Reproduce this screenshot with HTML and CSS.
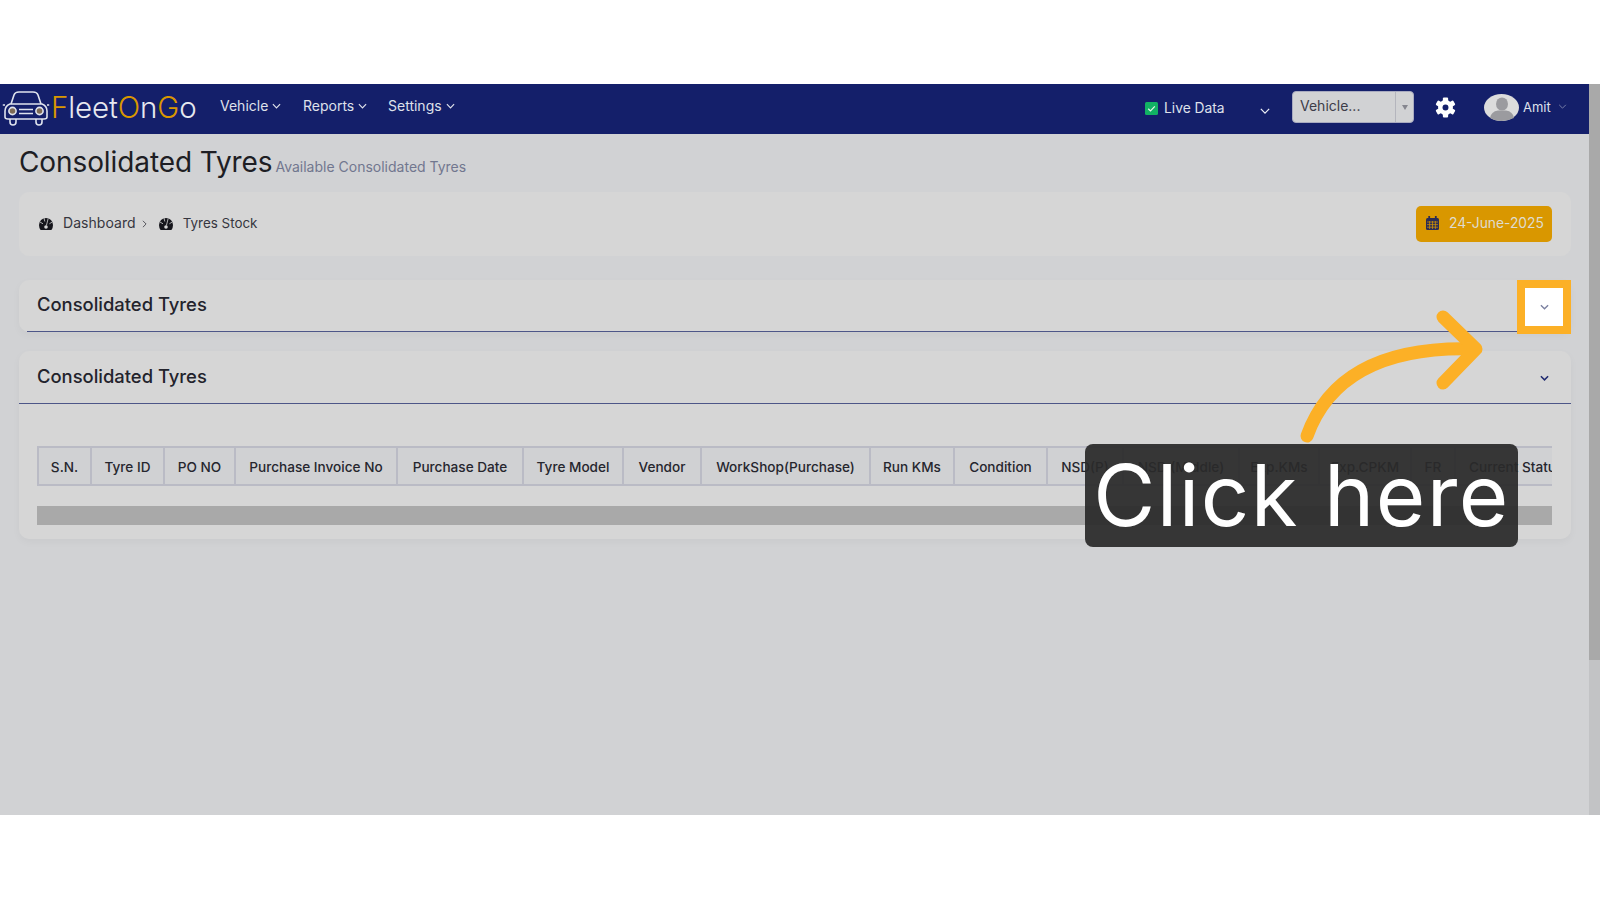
FILE: index.html
```html
<!DOCTYPE html>
<html lang="en">
<head>
<meta charset="utf-8">
<title>Consolidated Tyres</title>
<link rel="stylesheet" href="styles.css">
</head>
<body>
<div class="app">
  <div class="main">
    <header class="nav">
      <a class="brand">
        <svg class="car" viewBox="0 0 48 36" fill="none" stroke="#dfe3ee" stroke-width="1.6">
          <path d="M9 14 L12 5 Q13 2 17 2 H31 Q35 2 36 5 L39 14"/>
          <path d="M8 14 H40 Q45 16 45 21 V27 Q45 29 42 29 H6 Q3 29 3 27 V21 Q3 16 8 14 Z"/>
          <path d="M8 29 V32 Q8 35 11 35 Q14 35 14 32 V29 M34 29 V32 Q34 35 37 35 Q40 35 40 32 V29"/>
          <path d="M3 15 H0.8 M45 15 H47.2"/>
          <circle cx="10.5" cy="21" r="3.6" fill="#7d6a55"/>
          <circle cx="37.5" cy="21" r="3.6" fill="#7d6a55"/>
          <path d="M17 19.5 H31 M17 23.5 H31"/>
        </svg>
        <span class="wordmark"><span class="gold">F</span>leet<span class="gold">O</span>n<span class="gold">G</span>o</span>
      </a>
      <nav class="menu">
        <a class="menu-item menu-vehicle">Vehicle <svg class="chev" viewBox="0 0 10 6"><path d="M1 1 L5 5 L9 1"/></svg></a>
        <a class="menu-item menu-reports">Reports <svg class="chev" viewBox="0 0 10 6"><path d="M1 1 L5 5 L9 1"/></svg></a>
        <a class="menu-item">Settings <svg class="chev" viewBox="0 0 10 6"><path d="M1 1 L5 5 L9 1"/></svg></a>
      </nav>
      <div class="nav-right">
        <span class="live">
          <svg class="check" viewBox="0 0 13 13"><rect width="13" height="13" rx="1.5" fill="#12b264"/><path d="M3.2 6.8 L5.5 9 L9.8 4.4" fill="none" stroke="#e6f5ec" stroke-width="1.2"/></svg>
          <span>Live Data</span>
        </span>
        <svg class="live-chev" viewBox="0 0 12 7"><path d="M1 1 L6 6 L11 1"/></svg>
        <div class="select">
          <span class="select-value">Vehicle...</span>
          <span class="select-arrow"><i class="tri"></i></span>
        </div>
        <svg class="gear" viewBox="0 0 24 24">
          <g fill="#fff">
            <rect x="9" y="0.5" width="6" height="23" rx="1.2"/>
            <rect x="9" y="0.5" width="6" height="23" rx="1.2" transform="rotate(60 12 12)"/>
            <rect x="9" y="0.5" width="6" height="23" rx="1.2" transform="rotate(120 12 12)"/>
          </g>
          <circle cx="12" cy="12" r="6" fill="none" stroke="#fff" stroke-width="5"/>
          <circle cx="12" cy="12" r="3.4" fill="#141f6a"/>
        </svg>
        <svg class="avatar" viewBox="0 0 35 27">
          <ellipse cx="17.5" cy="13.5" rx="17.5" ry="13.5" fill="#dcdcdc"/>
          <ellipse cx="18" cy="10" rx="6" ry="6.6" fill="#9b9b9f"/>
          <path d="M6 24 Q7 17.5 14 16.5 H22 Q29 17.5 30 24 Q24 27 17.5 27 Q11 27 6 24 Z" fill="#9b9b9f"/>
        </svg>
        <span class="user">Amit</span>
        <svg class="user-chev" viewBox="0 0 10 6"><path d="M1 1 L5 5 L9 1"/></svg>
      </div>
    </header>

    <main class="content">
      <div class="title-row">
        <h1 class="title">Consolidated Tyres</h1>
        <span class="subtitle">Available Consolidated Tyres</span>
      </div>

      <section class="crumbs">
        <div class="crumb-list">
          <svg class="gauge" viewBox="0 0 14 12"><path d="M7 0 A7 7 0 0 0 0 7 Q0 10 1.6 12 H12.4 Q14 10 14 7 A7 7 0 0 0 7 0 Z" fill="#16161c"/><path d="M5 0 L5.8 3.5 M9.2 0.4 L7.4 7.5 M1 4 L4 5.8 M13.2 4 L10.4 5.8" stroke="#d6d6d6" stroke-width="0.8"/><circle cx="7" cy="9" r="1.8" fill="#d6d6d6"/></svg>
          <span class="crumb">Dashboard</span>
          <svg class="crumb-sep" viewBox="0 0 6 10"><path d="M1 1 L5 5 L1 9"/></svg>
          <svg class="gauge" viewBox="0 0 14 12"><path d="M7 0 A7 7 0 0 0 0 7 Q0 10 1.6 12 H12.4 Q14 10 14 7 A7 7 0 0 0 7 0 Z" fill="#16161c"/><path d="M5 0 L5.8 3.5 M9.2 0.4 L7.4 7.5 M1 4 L4 5.8 M13.2 4 L10.4 5.8" stroke="#d6d6d6" stroke-width="0.8"/><circle cx="7" cy="9" r="1.8" fill="#d6d6d6"/></svg>
          <span class="crumb crumb-last">Tyres Stock</span>
        </div>
        <div class="date">
          <svg class="cal" viewBox="0 0 13 14"><path d="M1.5 2 H11.5 Q13 2 13 3.5 V12.5 Q13 14 11.5 14 H1.5 Q0 14 0 12.5 V3.5 Q0 2 1.5 2 Z" fill="#2c2c55"/><path d="M3.2 0 V3 M9.8 0 V3" stroke="#2c2c55" stroke-width="1.8"/><path d="M1 6 H12 M1 8.6 H12 M1 11.2 H12 M3.6 5 V13 M6.5 5 V13 M9.4 5 V13" stroke="#d99700" stroke-width="0.7"/></svg>
          <span>24-June-2025</span>
        </div>
      </section>

      <section class="card card-collapsed">
        <div class="card-head card-head-inset">
          <h2 class="card-title">Consolidated Tyres</h2>
        </div>
      </section>

      <section class="card">
        <div class="card-head">
          <h2 class="card-title">Consolidated Tyres</h2>
          <svg class="card-chev" viewBox="0 0 10 6"><path d="M1 1 L5 5 L9 1"/></svg>
        </div>
        <div class="card-body">
          <div class="table-wrap">
            <table class="grid">
              <thead>
                <tr>
                  <th>S.N.</th><th>Tyre ID</th><th>PO NO</th><th>Purchase Invoice No</th><th>Purchase Date</th><th>Tyre Model</th><th>Vendor</th><th>WorkShop(Purchase)</th><th>Run KMs</th><th>Condition</th><th>NSD(P)</th><th>NSD (Middle)</th><th>Exp.KMs</th><th>Exp.CPKM</th><th>FR</th><th>Current Status</th>
                </tr>
              </thead>
            </table>
          </div>
          <div class="hscroll"></div>
        </div>
      </section>
    </main>
  </div>
  <div class="scrollbar"><div class="thumb"></div></div>

  <div class="highlight">
    <svg class="highlight-chev" viewBox="0 0 10 6"><path d="M1 1 L5 5 L9 1"/></svg>
  </div>
  <svg class="arrow" viewBox="0 0 210 150" fill="none">
    <path d="M17 136 C35 86 80 46 184 49"/>
    <path d="M153 17 L186 49 L153 83"/>
  </svg>
  <div class="tip">Click here</div>
</div>
</body>
</html>
```

FILE: styles.css
```css
* { box-sizing: border-box; }

html, body { margin: 0; padding: 0; background: #fff; overflow: hidden; }

body {
  height: 900px;
  padding-top: 84px;
  font-family: Inter, "Liberation Sans", sans-serif;
  color: #2c2c34;
}

.app {
  position: relative;
  display: flex;
  width: 1600px;
  height: 731px;
  background: #d1d2d4;
}

.main { flex: 1; min-width: 0; display: flex; flex-direction: column; }

.scrollbar { width: 11px; background: #c2c3c5; }
.thumb { height: 576px; background: #a9a9a9; }

/* top bar */
.nav {
  display: flex;
  align-items: center;
  height: 50px;
  background: #141f6a;
  color: #dfe1ea;
  flex: none;
}

.brand { display: flex; align-items: center; margin: -4px 0 0 2px; width: 218px; }
.car { width: 48px; height: 36px; flex: none; margin-top: 2px; }
.wordmark {
  font-size: 29.5px;
  font-weight: 300;
  margin-left: 1px;
  letter-spacing: -0.1px;
  color: #e6e8ef;
}
.gold { color: #d99700; }

.menu { display: flex; align-items: center; }
.menu-item { display: flex; align-items: center; gap: 4px; font-size: 14px; font-weight: 400; margin-top: -7px; }
.menu-vehicle { width: 83px; }
.menu-reports { width: 85px; }

.chev { width: 9px; height: 6px; fill: none; stroke: #dfe1ea; stroke-width: 1.3; }

.nav-right { display: flex; align-items: center; margin-left: auto; }
.live { display: flex; align-items: center; gap: 6px; font-size: 13.8px; width: 115px; margin-top: -2px; }
.check { width: 13px; height: 13px; flex: none; }
.live-chev { width: 10px; height: 6px; fill: none; stroke: #eef0f6; stroke-width: 1.5; margin-top: 3px; }

.select {
  display: flex;
  align-items: stretch;
  width: 122px;
  height: 32px;
  margin: -4px 0 0 22px;
  background: #d1d2d4;
  border: 1px solid #a9abc0;
  border-radius: 4px;
  color: #3d3d48;
  font-size: 14px;
}
.select-value { flex: 1; padding-left: 7px; line-height: 28px; }
.select-arrow {
  display: flex;
  align-items: center;
  justify-content: center;
  width: 18px;
  border-left: 1px solid #b4b5bd;
}
.tri {
  width: 0;
  height: 0;
  border-left: 3px solid transparent;
  border-right: 3px solid transparent;
  border-top: 5px solid #85868f;
}

.gear { width: 21px; height: 21px; margin: -3px 0 0 21px; flex: none; }
.avatar { width: 35px; height: 27px; margin: -3px 0 0 28px; flex: none; }
.user { font-size: 13px; margin: -5px 0 0 4px; width: 29px; }
.user-chev { width: 9px; height: 5px; fill: none; stroke: #8a90b4; stroke-width: 1; margin: -5px 22px 0 6px; }

/* content */
.content { padding: 0 18px 0 19px; }

.title-row { display: flex; align-items: baseline; gap: 3px; height: 58px; padding-top: 8px; }
.title { margin: 0; font-size: 28px; font-weight: 400; color: #1e1e24; letter-spacing: -0.1px; line-height: 40px; }
.subtitle { font-size: 14px; color: #71778f; }

.crumbs {
  display: flex;
  align-items: center;
  justify-content: space-between;
  height: 64px;
  margin-bottom: 24px;
  padding: 0 19px 0 20px;
  background: #d6d6d6;
  border-radius: 10px;
}
.crumb-list { display: flex; align-items: center; margin-top: -3px; }
.gauge { width: 14px; height: 12px; flex: none; margin-top: 2px; }
.crumb { font-size: 14px; color: #36363f; margin-left: 10px; letter-spacing: 0.06px; }
.crumb-last { font-size: 13.4px; letter-spacing: 0; }
.crumb-sep { width: 5px; height: 8px; margin: 2px 12px 0 6px; fill: none; stroke: #36363f; stroke-width: 1; }

.date {
  display: flex;
  align-items: center;
  gap: 10px;
  width: 136px;
  height: 36px;
  padding: 0 0 2px 10px;
  background: #d99700;
  border-radius: 5px;
  color: #dedcd0;
  font-size: 13.8px;
  white-space: nowrap;
}
.cal { width: 13px; height: 14px; flex: none; }

.card {
  background: #d6d6d6;
  border-radius: 10px;
  box-shadow: 0 3px 8px rgba(0, 0, 0, 0.035);
}
.card-collapsed { height: 52px; margin-bottom: 19px; }

.card-head {
  display: flex;
  align-items: center;
  justify-content: space-between;
  height: 53px;
  padding: 0 22px 2px 18px;
  border-bottom: 1px solid #4d5688;
}
.card-head-inset { height: 52px; margin-left: 8px; padding: 0 22px 3px 10px; }
.card-title { margin: 0; font-size: 18.4px; font-weight: 500; color: #23232c; }
.card-chev { width: 9px; height: 6px; margin-top: 4px; fill: none; stroke: #202b70; stroke-width: 1.7; }

.card-body { padding: 42px 19px 14px 18px; }
.table-wrap { overflow: hidden; }

.grid { border-collapse: collapse; table-layout: fixed; width: 1563px; }
.grid th {
  height: 38px;
  padding: 2px 0 0;
  background: #d0d1d3;
  border: 2px solid #babbc5;
  font-size: 13.6px;
  font-weight: 500;
  color: #26262e;
  white-space: nowrap;
  overflow: hidden;
}
.grid th:nth-child(1) { width: 53px; }
.grid th:nth-child(2) { width: 73px; }
.grid th:nth-child(3) { width: 71px; }
.grid th:nth-child(4) { width: 162px; }
.grid th:nth-child(5) { width: 126px; }
.grid th:nth-child(6) { width: 100px; }
.grid th:nth-child(7) { width: 78px; }
.grid th:nth-child(8) { width: 169px; }
.grid th:nth-child(9) { width: 84px; }
.grid th:nth-child(10) { width: 93px; }
.grid th:nth-child(11) { width: 76px; }
.grid th:nth-child(12) { width: 116px; }
.grid th:nth-child(13) { width: 80px; }
.grid th:nth-child(14) { width: 92px; }
.grid th:nth-child(15) { width: 44px; }
.grid th:nth-child(16) { width: 146px; padding-left: 13px; text-align: left; }

.hscroll { height: 19px; margin-top: 20px; background: #a9a9a9; }

/* guide overlay */
.highlight {
  position: absolute;
  left: 1517px;
  top: 196px;
  display: flex;
  align-items: center;
  justify-content: center;
  width: 54px;
  height: 54px;
  background: #fff;
  border: 8px solid #fcb026;
}
.highlight-chev { width: 9px; height: 6px; fill: none; stroke: #7b80a0; stroke-width: 1.5; }

.arrow {
  position: absolute;
  left: 1290px;
  top: 216px;
  width: 210px;
  height: 150px;
  stroke: #fcb026;
  stroke-width: 13;
  stroke-linecap: round;
  stroke-linejoin: round;
}

.tip {
  position: absolute;
  left: 1085px;
  top: 360px;
  width: 433px;
  height: 103px;
  background: rgba(42, 42, 42, 0.93);
  border-radius: 8px;
  color: #fff;
  font-size: 85px;
  font-weight: 400;
  letter-spacing: 1.4px;
  line-height: 103px;
  text-align: center;
  white-space: nowrap;
}
```
